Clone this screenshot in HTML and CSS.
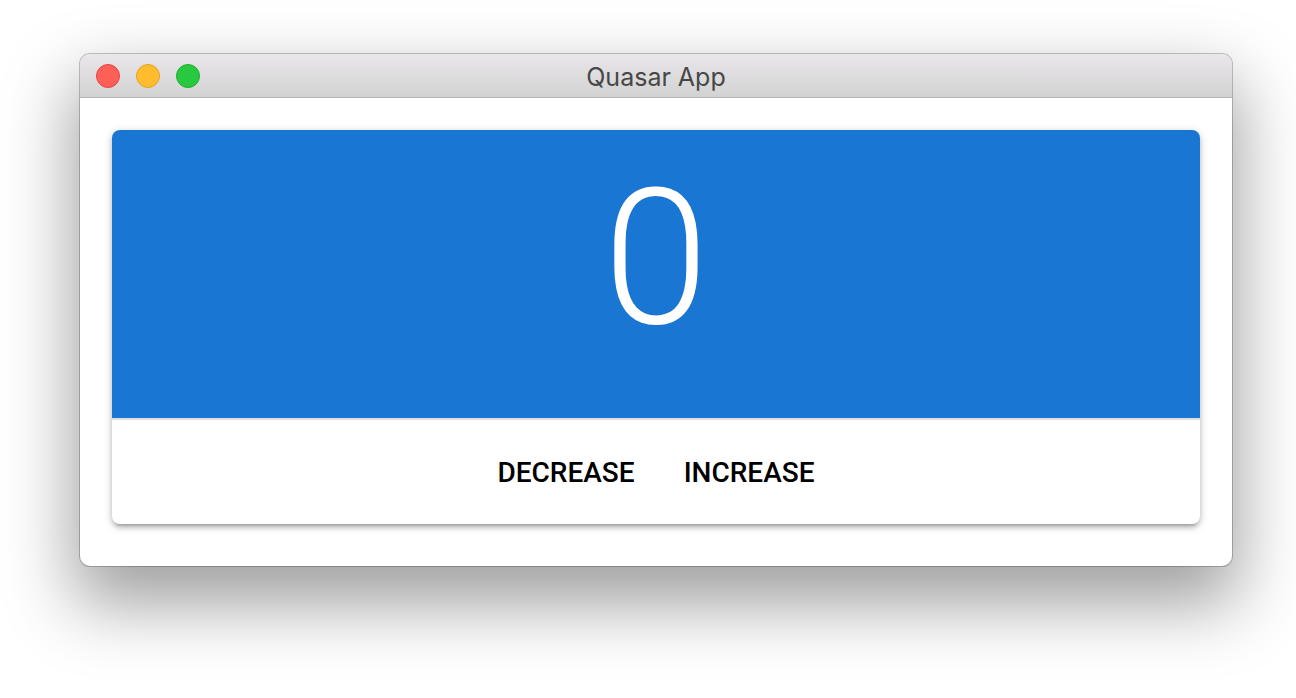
FILE: index.html
```html
<!DOCTYPE html>
<html lang="en">
<head>
    <meta charset="UTF-8">
    <meta name="viewport" content="width=device-width, initial-scale=1.0">
    <title>Quasar App</title>
    <link rel="stylesheet" href="styles.css">
</head>
<body>

<div class="window">
    <div class="titlebar">
        <div class="lights">
            <span class="light close"></span>
            <span class="light minimize"></span>
            <span class="light zoom"></span>
        </div>
        <div class="title">Quasar App</div>
    </div>

    <div class="content">
        <div class="card">
            <div class="counter">0</div>
            <div class="actions">
                <button class="flat-btn">Decrease</button>
                <button class="flat-btn">Increase</button>
            </div>
        </div>
    </div>
</div>

</body>
</html>
```

FILE: styles.css
```css
html, body {
    height: 100%;
}
body {
    margin: 0;
    padding: 54px 0 0 80px;
    box-sizing: border-box;
    background: #ffffff;
    overflow: hidden;
    font-family: Roboto, "Liberation Sans", sans-serif;
}
.window {
    width: 1152px;
    height: 512px;
    border-radius: 10px;
    background: #ffffff;
    overflow: hidden;
    box-shadow: 0 0 0 1px rgba(0, 0, 0, 0.22), 0 32px 70px 6px rgba(0, 0, 0, 0.38);
}
.titlebar {
    position: relative;
    height: 43px;
    border-bottom: 1px solid #b4b4b4;
    background: linear-gradient(#e9e7e9, #d3d2d3);
    display: flex;
    align-items: center;
    justify-content: center;
}
.lights {
    position: absolute;
    left: 16px;
    top: 10px;
    display: flex;
    gap: 16px;
}
.light {
    width: 22px;
    height: 22px;
    border-radius: 50%;
    border: 1px solid transparent;
}
.close {
    background: #fe5f57;
    border-color: #e2463f;
}
.minimize {
    background: #febc2e;
    border-color: #e1a325;
}
.zoom {
    background: #28c840;
    border-color: #1fad2f;
}
.title {
    font-family: Inter, "Liberation Sans", sans-serif;
    font-size: 25px;
    color: #474747;
    margin-top: 3px;
}
.content {
    padding: 32px 32px 42px;
}
.card {
    border-radius: 8px;
    background: #ffffff;
    overflow: hidden;
    box-shadow: 0 2px 10px rgba(0, 0, 0, 0.2), 0 4px 4px rgba(0, 0, 0, 0.14), 0 6px 2px -4px rgba(0, 0, 0, 0.12);
}
.counter {
    height: 290px;
    box-sizing: border-box;
    padding-top: 33px;
    background: #1976d2;
    color: #ffffff;
    text-align: center;
    font-size: 190px;
    font-weight: 300;
    line-height: 190px;
    border-bottom: 2px solid #e0e0e0;
}
.actions {
    height: 104px;
    display: flex;
    align-items: center;
    justify-content: center;
    gap: 17px;
}
.flat-btn {
    padding: 16px;
    border: none;
    background: none;
    font-family: Roboto, "Liberation Sans", sans-serif;
    font-size: 28px;
    font-weight: 500;
    text-transform: uppercase;
    color: #000000;
    cursor: pointer;
}
```
